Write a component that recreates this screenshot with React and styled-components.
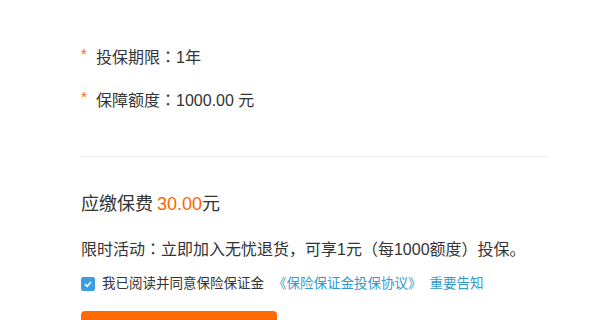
import styled, { createGlobalStyle } from "styled-components";

const GlobalStyle = createGlobalStyle`
  html, body {
    margin: 0;
    padding: 0;
    background: #fff;
  }
  body {
    font-family: "Liberation Sans", Arial, "Noto Sans CJK SC", sans-serif;
    color: #333;
  }
`;

const Page = styled.div`
  width: 600px;
  height: 320px;
  overflow: hidden;
  padding: 0 52px 0 81px;
  box-sizing: border-box;
`;

const Fields = styled.div`
  display: flex;
  flex-direction: column;
  gap: 19px;
  padding-top: 45px;
  padding-bottom: 44px;
  border-bottom: 1px solid #ececec;
`;

const Field = styled.div`
  display: flex;
  align-items: flex-start;
  font-size: 16px;
  line-height: 22px;
`;

const Star = styled.span`
  color: #f60;
  width: 15px;
  font-size: 15px;
  line-height: 18px;
`;

// centred full-width colon, as in the original
const Colon = styled.span`
  font-family: "Noto Sans CJK JP", sans-serif;
`;

const Price = styled.div`
  margin-top: 34px;
  font-size: 18px;
  line-height: 26px;
`;

const Amount = styled.span`
  color: #f60;
  margin-left: 4px;
`;

const Promo = styled.div`
  margin-top: 20px;
  font-size: 16px;
  line-height: 22px;
`;

const Agree = styled.label`
  display: flex;
  align-items: center;
  margin-top: 14px;
  font-size: 13.5px;
  line-height: 18px;
`;

const Box = styled.span`
  width: 14px;
  height: 14px;
  border-radius: 2px;
  background: #3d9de0;
  display: inline-flex;
  align-items: center;
  justify-content: center;
  margin-right: 7px;
`;

const Link = styled.a`
  color: #3399cc;
  text-decoration: none;
  margin-left: ${(p) => p.gap || 0}px;
`;

const Submit = styled.button`
  margin-top: 18px;
  width: 196px;
  height: 40px;
  border: none;
  border-radius: 4px;
  background: #ff6a00;
  color: #fff;
  font-size: 16px;
`;

const App = () => (
  <>
    <GlobalStyle />
    <Page>
      <Fields>
        <Field>
          <Star>*</Star>
          <span>
            投保期限<Colon>：</Colon>1年
          </span>
        </Field>
        <Field>
          <Star>*</Star>
          <span>
            保障额度<Colon>：</Colon>1000.00 元
          </span>
        </Field>
      </Fields>
      <Price>
        应缴保费<Amount>30.00</Amount>元
      </Price>
      <Promo>
        限时活动<Colon>：</Colon>立即加入无忧退货，可享1元<Colon>（</Colon>每1000额度<Colon>）</Colon>投保。
      </Promo>
      <Agree>
        <Box>
          <svg width="10" height="10" viewBox="0 0 10 10">
            <path d="M2 5.2 L4.2 7.3 L8 3" stroke="#fff" strokeWidth="1.6" fill="none" />
          </svg>
        </Box>
        我已阅读并同意保险保证金
        <Link gap={9}>《保险保证金投保协议》</Link>
        <Link gap={8}>重要告知</Link>
      </Agree>
      <Submit>提交</Submit>
    </Page>
  </>
);

export default App;
